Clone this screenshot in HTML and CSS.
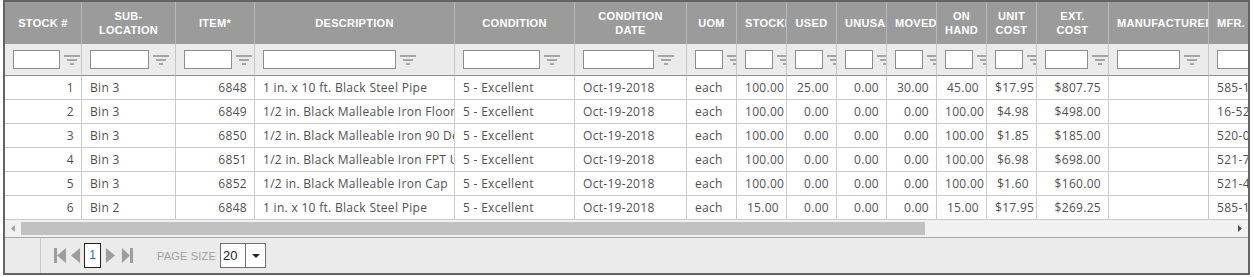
FILE: index.html
```html
<!DOCTYPE html>
<html lang="en">
<head>
    <meta charset="UTF-8">
    <title>Stock Grid</title>
    <link rel="stylesheet" href="styles.css">
</head>
<body>
    <div class="grid">
        <div class="grid-body">
            <table class="grid-table">
                <colgroup>
                    <col class="c-stock"><col class="c-loc"><col class="c-item"><col class="c-desc">
                    <col class="c-cond"><col class="c-date"><col class="c-num"><col class="c-num">
                    <col class="c-num"><col class="c-num"><col class="c-num"><col class="c-num">
                    <col class="c-num"><col class="c-ext"><col class="c-mfr"><col class="c-part"><col class="c-note">
                </colgroup>
                <thead>
                    <tr class="head-row">
                        <th>Stock #</th>
                        <th>Sub-Location</th>
                        <th>Item*</th>
                        <th>Description</th>
                        <th>Condition</th>
                        <th>Condition Date</th>
                        <th>UOM</th>
                        <th>Stocked</th>
                        <th>Used</th>
                        <th>Unusable</th>
                        <th>Moved</th>
                        <th>On Hand</th>
                        <th>Unit Cost</th>
                        <th>Ext. Cost</th>
                        <th>Manufacturer</th>
                        <th class="left">Mfr.&nbsp;Part&nbsp;#</th>
                        <th>Notes</th>
                    </tr>
                    <tr class="filter-row" id="filterRow"></tr>
                </thead>
                <tbody>
                    <tr>
                        <td class="num">1</td><td>Bin 3</td><td class="num">6848</td><td>1 in. x 10 ft. Black Steel Pipe</td>
                        <td>5 - Excellent</td><td>Oct-19-2018</td><td>each</td><td class="num">100.00</td><td class="num">25.00</td>
                        <td class="num">0.00</td><td class="num">30.00</td><td class="num">45.00</td><td class="num">$17.95</td>
                        <td class="num">$807.75</td><td></td><td>585-1010</td><td></td>
                    </tr>
                    <tr>
                        <td class="num">2</td><td>Bin 3</td><td class="num">6849</td><td>1/2 in. Black Malleable Iron Floor Flange</td>
                        <td>5 - Excellent</td><td>Oct-19-2018</td><td>each</td><td class="num">100.00</td><td class="num">0.00</td>
                        <td class="num">0.00</td><td class="num">0.00</td><td class="num">100.00</td><td class="num">$4.98</td>
                        <td class="num">$498.00</td><td></td><td>16-520</td><td></td>
                    </tr>
                    <tr>
                        <td class="num">3</td><td>Bin 3</td><td class="num">6850</td><td>1/2 in. Black Malleable Iron 90 Degree Elbow</td>
                        <td>5 - Excellent</td><td>Oct-19-2018</td><td>each</td><td class="num">100.00</td><td class="num">0.00</td>
                        <td class="num">0.00</td><td class="num">0.00</td><td class="num">100.00</td><td class="num">$1.85</td>
                        <td class="num">$185.00</td><td></td><td>520-004</td><td></td>
                    </tr>
                    <tr>
                        <td class="num">4</td><td>Bin 3</td><td class="num">6851</td><td>1/2 in. Black Malleable Iron FPT Union</td>
                        <td>5 - Excellent</td><td>Oct-19-2018</td><td>each</td><td class="num">100.00</td><td class="num">0.00</td>
                        <td class="num">0.00</td><td class="num">0.00</td><td class="num">100.00</td><td class="num">$6.98</td>
                        <td class="num">$698.00</td><td></td><td>521-706</td><td></td>
                    </tr>
                    <tr>
                        <td class="num">5</td><td>Bin 3</td><td class="num">6852</td><td>1/2 in. Black Malleable Iron Cap</td>
                        <td>5 - Excellent</td><td>Oct-19-2018</td><td>each</td><td class="num">100.00</td><td class="num">0.00</td>
                        <td class="num">0.00</td><td class="num">0.00</td><td class="num">100.00</td><td class="num">$1.60</td>
                        <td class="num">$160.00</td><td></td><td>521-404</td><td></td>
                    </tr>
                    <tr>
                        <td class="num">6</td><td>Bin 2</td><td class="num">6848</td><td>1 in. x 10 ft. Black Steel Pipe</td>
                        <td>5 - Excellent</td><td>Oct-19-2018</td><td>each</td><td class="num">15.00</td><td class="num">0.00</td>
                        <td class="num">0.00</td><td class="num">0.00</td><td class="num">15.00</td><td class="num">$17.95</td>
                        <td class="num">$269.25</td><td></td><td>585-1010</td><td></td>
                    </tr>
                </tbody>
            </table>
        </div>

        <div class="hscroll">
            <div class="scroll-btn">
                <svg width="4" height="7" viewBox="0 0 4 7"><polygon points="4,0 0,3.5 4,7" fill="#a3a3a3"/></svg>
            </div>
            <div class="scroll-thumb"></div>
            <div class="scroll-track"></div>
            <div class="scroll-btn">
                <svg width="4" height="7" viewBox="0 0 4 7"><polygon points="0,0 4,3.5 0,7" fill="#505050"/></svg>
            </div>
        </div>

        <div class="pager">
            <div class="pager-lead"></div>
            <div class="pager-nav">
                <svg class="pg-first" width="12" height="15" viewBox="0 0 12 15"><rect x="0" y="0" width="3" height="15" fill="#9d9d9d"/><polygon points="12,0 3,7.5 12,15" fill="#9d9d9d"/></svg>
                <svg class="pg-prev" width="9" height="15" viewBox="0 0 9 15"><polygon points="9,0 0,7.5 9,15" fill="#9d9d9d"/></svg>
                <span class="page-box">1</span>
                <svg class="pg-next" width="9" height="15" viewBox="0 0 9 15"><polygon points="0,0 9,7.5 0,15" fill="#9d9d9d"/></svg>
                <svg class="pg-last" width="11" height="15" viewBox="0 0 11 15"><polygon points="0,0 8,7.5 0,15" fill="#9d9d9d"/><rect x="8" y="0" width="3" height="15" fill="#9d9d9d"/></svg>
                <span class="page-size-label">Page size</span>
                <div class="page-size">
                    <span class="page-size-value">20</span>
                    <span class="page-size-btn">
                        <svg width="8" height="4" viewBox="0 0 8 4"><polygon points="0,0 8,0 4,4" fill="#222"/></svg>
                    </span>
                </div>
            </div>
        </div>
    </div>

    <script>
        // one filter cell per column
        const filterRow = document.getElementById('filterRow');
        const cols = document.querySelectorAll('.grid-table col').length;
        const icon = '<svg width="16" height="10" viewBox="0 0 16 10">' +
            '<rect x="0" y="0" width="16" height="2" fill="#a6a6a6"/>' +
            '<rect x="3" y="4" width="10" height="2" fill="#a6a6a6"/>' +
            '<rect x="6" y="8" width="4" height="2" fill="#a6a6a6"/></svg>';
        for (let i = 0; i < cols; i++) {
            const td = document.createElement('td');
            td.innerHTML = '<div class="filter"><input type="text">' + icon + '</div>';
            filterRow.appendChild(td);
        }
    </script>
</body>
</html>
```

FILE: styles.css
```css
body {
    margin: 0;
    background-color: #fff;
    font-family: "Open Sans", Arial, sans-serif;
}
.grid {
    margin-left: 3px;
    width: 1247px;
    box-sizing: border-box;
    border: 2px solid #646464;
    overflow: hidden;
}
.grid-body { overflow: hidden; }
.grid-table {
    table-layout: fixed;
    width: 1604px;
    border-collapse: separate;
    border-spacing: 0;
}
.c-stock { width: 77px; }
.c-loc { width: 94px; }
.c-item { width: 79px; }
.c-desc { width: 200px; }
.c-cond { width: 120px; }
.c-date { width: 112px; }
.c-num { width: 50px; }
.c-ext { width: 72px; }
.c-mfr { width: 100px; }
.c-part { width: 140px; }
.c-note { width: 260px; }

.head-row { height: 42px; }
.head-row th {
    background-color: #9b9b9b;
    color: #fff;
    font-family: "Liberation Sans", Arial, sans-serif;
    font-size: 11px;
    font-weight: bold;
    line-height: 14px;
    letter-spacing: 0.3px;
    text-transform: uppercase;
    text-align: center;
    padding: 0 8px;
    border-right: 1px solid #b8b8b8;
    overflow: hidden;
}
.head-row th.left { text-align: left; white-space: nowrap; }

.filter-row { height: 32px; }
.filter-row td {
    background-color: #ebebeb;
    border-right: 1px solid #c6c6c6;
    border-bottom: 1px solid #8e8e8e;
    padding: 0;
    overflow: hidden;
}
.filter {
    display: flex;
    align-items: center;
    padding-left: 8px;
}
.filter input {
    box-sizing: border-box;
    flex-shrink: 0;
    width: calc(70% - 1px);
    height: 19px;
    margin: 0;
    padding: 0 2px;
    border: 1px solid #8c8c8c;
    background-color: #fff;
}
.filter svg {
    flex-shrink: 0;
    margin-left: 4px;
}

tbody tr { height: 24px; }
tbody td {
    padding: 0 7px 0 8px;
    font-size: 12px;
    letter-spacing: 0.3px;
    color: #505050;
    white-space: nowrap;
    overflow: hidden;
    border-right: 1px solid #cbcbcb;
    border-bottom: 1px solid #cbcbcb;
}
tbody td.num { text-align: right; }

.hscroll {
    display: flex;
    height: 17px;
    background-color: #f1f1f1;
}
.scroll-btn {
    width: 16px;
    flex-shrink: 0;
    display: flex;
    align-items: center;
    justify-content: center;
}
.scroll-thumb {
    width: 904px;
    margin: 2px 0;
    background-color: #c1c1c1;
}
.scroll-track { flex: 1; }

.pager {
    display: flex;
    height: 35px;
    border-top: 1px solid #a9a9a9;
    background-color: #ebebeb;
}
.pager-lead {
    width: 35px;
    border-right: 1px solid #c9c9c9;
}
.pager-nav {
    display: flex;
    align-items: center;
    padding-left: 13px;
}
.pg-first { margin-right: 5px; }
.pg-prev { margin-right: 4px; }
.page-box {
    box-sizing: border-box;
    width: 17px;
    height: 25px;
    border: 1px solid #222;
    background-color: #fff;
    color: #2a6ebb;
    font-family: "Liberation Sans", Arial, sans-serif;
    font-size: 12px;
    line-height: 23px;
    text-align: center;
    margin-right: 5px;
}
.pg-next { margin-right: 7px; }
.pg-last { margin-right: 24px; }
.page-size-label {
    font-family: "Liberation Sans", Arial, sans-serif;
    font-size: 11px;
    color: #a0a0a0;
    text-transform: uppercase;
    letter-spacing: 0.2px;
    margin-right: 4px;
}
.page-size {
    box-sizing: border-box;
    display: flex;
    width: 46px;
    height: 25px;
    border: 1px solid #6f6f6f;
    background-color: #fff;
}
.page-size-value {
    flex: 1;
    font-family: "Liberation Sans", Arial, sans-serif;
    font-size: 13px;
    line-height: 23px;
    color: #222;
    padding-left: 2px;
}
.page-size-btn {
    width: 19px;
    border-left: 1px solid #6f6f6f;
    display: flex;
    align-items: center;
    justify-content: center;
}
```
